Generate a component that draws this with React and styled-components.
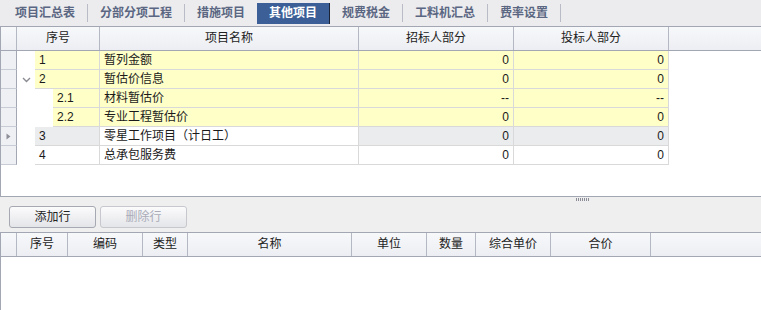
import React from "react";
import styled, { createGlobalStyle } from "styled-components";

const GlobalStyle = createGlobalStyle`
  html, body {
    margin: 0;
    padding: 0;
    background: #ffffff;
  }
  body {
    font-family: "Liberation Sans", "Noto Sans CJK SC", sans-serif;
    font-size: 12px;
    color: #1a1a1a;
  }
`;

const Page = styled.div`
  width: 761px;
  height: 310px;
  display: flex;
  flex-direction: column;
  overflow: hidden;
  background: #ffffff;
`;

/* tabs */
const TabBar = styled.div`
  height: 26px;
  display: flex;
  align-items: center;
  padding-left: 3px;
  background: #ececee;
  box-sizing: border-box;
`;

const Tab = styled.div`
  height: 21px;
  padding: 0 12px;
  display: flex;
  align-items: center;
  font-weight: bold;
  line-height: 21px;
  color: ${(p) => (p.$active ? "#ffffff" : "#5a6682")};
  background: ${(p) => (p.$active ? "#3b5f96" : "transparent")};
  border-right: ${(p) => (p.$active ? "1px solid #1b2436" : "none")};
  box-sizing: border-box;
  margin-top: ${(p) => (p.$active ? "1px" : "0")};
`;

const TabSep = styled.div`
  width: 1px;
  height: 18px;
  background: #b9bcc6;
`;

/* top grid */
const TopGrid = styled.div`
  height: 171px;
  border-top: 1px solid #a3a7b3;
  border-bottom: 1px solid #a3a7b3;
  border-left: 1px solid #a3a7b3;
  box-sizing: border-box;
  display: flex;
  flex-direction: column;
  background: #ffffff;
`;

const HeadRow = styled.div`
  display: grid;
  grid-template-columns: ${(p) => p.$cols};
  height: 24px;
  border-bottom: 1px solid #a3a7b3;
  box-sizing: border-box;
  background: linear-gradient(#f7f8fa, #eceef3);
`;

const HeadCell = styled.div`
  display: flex;
  align-items: center;
  justify-content: center;
  border-right: ${(p) => (p.$last ? "none" : "1px solid #b4b8c3")};
  color: #222;
  line-height: 23px;
`;

const DataRow = styled.div`
  display: grid;
  grid-template-columns: 16px ${(p) => p.$indent}px ${(p) => 83 - p.$indent}px 259px 155px 155px 1fr;
  height: 19px;
`;

const RowHead = styled.div`
  background: #eff0f3;
  border-right: 1px solid #a3a7b3;
  border-bottom: 1px solid #c8ccd4;
  display: flex;
  align-items: center;
  justify-content: center;
`;

const Indent = styled.div`
  background: #ffffff;
  display: flex;
  align-items: center;
  justify-content: center;
`;

const Cell = styled.div`
  background: ${(p) => p.$bg};
  border-right: 1px solid #d9d9d9;
  border-bottom: 1px solid #d9d9d9;
  display: flex;
  align-items: center;
  justify-content: ${(p) => (p.$right ? "flex-end" : "flex-start")};
  padding: 0 4px;
  line-height: 18px;
  white-space: nowrap;
  box-sizing: border-box;
`;

const Blank = styled.div`
  background: #ffffff;
`;

/* splitter + buttons */
const Splitter = styled.div`
  height: 35px;
  background: #efefef;
  display: flex;
  flex-direction: column;
  box-sizing: border-box;
`;

const Grip = styled.div`
  margin: 1px 0 0 576px;
  width: 13px;
  height: 3px;
  background: repeating-linear-gradient(to right, #8a8d96 0 1px, transparent 1px 2px);
`;

const ButtonRow = styled.div`
  display: flex;
  gap: 4px;
  padding: 5px 0 0 9px;
`;

const Button = styled.div`
  width: 87px;
  height: 22px;
  box-sizing: border-box;
  border: 1px solid ${(p) => (p.$disabled ? "#c6c8ce" : "#a6a9b1")};
  border-radius: 3px;
  background: linear-gradient(#fbfbfc, #e4e5e9);
  color: ${(p) => (p.$disabled ? "#a9abb8" : "#222")};
  display: flex;
  align-items: center;
  justify-content: center;
  line-height: 20px;
`;

/* bottom grid */
const BottomGrid = styled.div`
  flex: 1;
  display: flex;
  flex-direction: column;
  border-top: 1px solid #a3a7b3;
  border-left: 1px solid #a3a7b3;
`;

const BottomBody = styled.div`
  flex: 1;
  background: #ffffff;
`;

const ChevronDown = () => (
  <svg width="9" height="6" viewBox="0 0 9 6">
    <path d="M1 1 L4.5 4.5 L8 1" fill="none" stroke="#8a8c92" strokeWidth="1.4" />
  </svg>
);

const RowMarker = () => (
  <svg width="5" height="7" viewBox="0 0 5 7">
    <path d="M0.5 0.5 L4.5 3.5 L0.5 6.5 Z" fill="#8d9098" />
  </svg>
);

const YELLOW = "#ffffc8";
const GRAY = "#ebecee";

const tabs = ["项目汇总表", "分部分项工程", "措施项目", "其他项目", "规费税金", "工料机汇总", "费率设置"];

const rows = [
  { no: "1", name: "暂列金额", a: "0", b: "0", indent: 18, bg: YELLOW },
  { no: "2", name: "暂估价信息", a: "0", b: "0", indent: 18, bg: YELLOW, open: true },
  { no: "2.1", name: "材料暂估价", a: "--", b: "--", indent: 36, bg: YELLOW },
  { no: "2.2", name: "专业工程暂估价", a: "0", b: "0", indent: 36, bg: YELLOW },
  { no: "3", name: "零星工作项目（计日工）", a: "0", b: "0", indent: 18, bg: GRAY, current: true },
  { no: "4", name: "总承包服务费", a: "0", b: "0", indent: 18, bg: "#ffffff" },
];

const bottomCols = [
  ["", 16],
  ["序号", 51],
  ["编码", 75],
  ["类型", 45],
  ["名称", 164],
  ["单位", 75],
  ["数量", 49],
  ["综合单价", 75],
  ["合价", 100],
];

const App = () => {
  return (
    <Page>
      <GlobalStyle />
      <TabBar>
        {tabs.map((t, i) => (
          <React.Fragment key={t}>
            <Tab $active={t === "其他项目"}>{t}</Tab>
            {t !== "其他项目" && tabs[i + 1] !== "其他项目" && <TabSep />}
          </React.Fragment>
        ))}
      </TabBar>

      <TopGrid>
        <HeadRow $cols="16px 83px 259px 155px 155px 1fr">
          <HeadCell />
          <HeadCell>序号</HeadCell>
          <HeadCell>项目名称</HeadCell>
          <HeadCell>招标人部分</HeadCell>
          <HeadCell>投标人部分</HeadCell>
          <HeadCell $last />
        </HeadRow>
        {rows.map((r) => (
          <DataRow key={r.no} $indent={r.indent}>
            <RowHead>{r.current && <RowMarker />}</RowHead>
            <Indent>{r.open && <ChevronDown />}</Indent>
            <Cell $bg={r.bg}>{r.no}</Cell>
            <Cell $bg={r.current ? "#ffffff" : r.bg}>{r.name}</Cell>
            <Cell $bg={r.bg} $right>{r.a}</Cell>
            <Cell $bg={r.bg} $right>{r.b}</Cell>
            <Blank />
          </DataRow>
        ))}
      </TopGrid>

      <Splitter>
        <Grip />
        <ButtonRow>
          <Button>添加行</Button>
          <Button $disabled>删除行</Button>
        </ButtonRow>
      </Splitter>

      <BottomGrid>
        <HeadRow $cols={bottomCols.map((c) => c[1] + "px").join(" ") + " 1fr"}>
          {bottomCols.map((c, i) => (
            <HeadCell key={i}>{c[0]}</HeadCell>
          ))}
          <HeadCell $last />
        </HeadRow>
        <BottomBody />
      </BottomGrid>
    </Page>
  );
};

export default App;
